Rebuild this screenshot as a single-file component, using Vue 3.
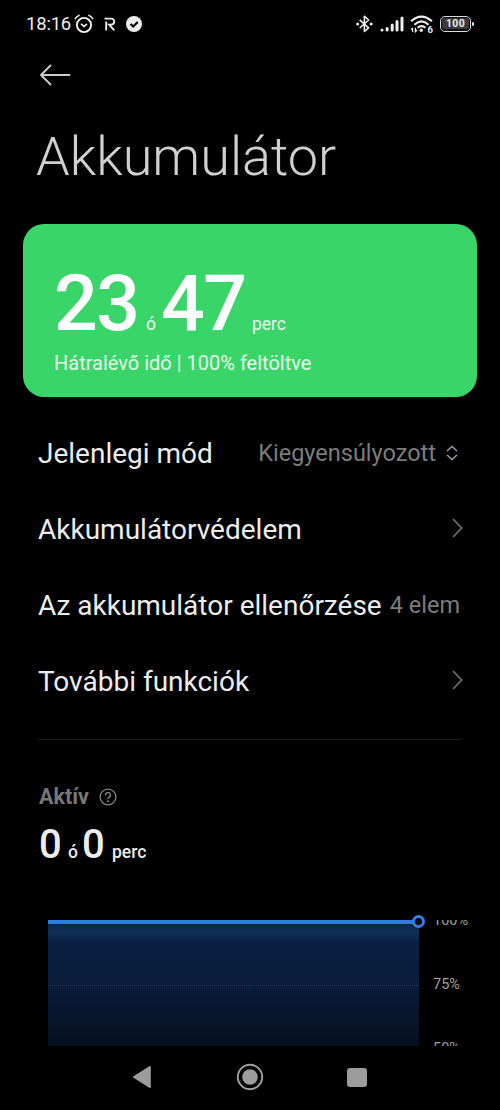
<script setup>
const rows = [
  { label: 'Jelenlegi mód', value: 'Kiegyensúlyozott', icon: 'updown' },
  { label: 'Akkumulátorvédelem', icon: 'chevron' },
  { label: 'Az akkumulátor ellenőrzése', value: '4 elem' },
  { label: 'További funkciók', icon: 'chevron' },
]
const levels = ['100%', '75%', '50%']
</script>

<template>
  <div class="screen">
    <header class="status">
      <div class="status-left">
        <span class="time">18:16</span>
        <svg class="alarm" width="20" height="20" viewBox="0 0 20 20" fill="none" stroke="#f0f0f0" stroke-linecap="round">
          <circle cx="10" cy="11" r="7.1" stroke-width="1.9" />
          <path d="M1.3 4.6Q2.6 2.3 5 1.4M18.7 4.6Q17.4 2.3 15 1.4" stroke-width="1.6" />
          <path d="M7.4 10.2L10 12.4L12.6 10.4" stroke-width="1.6" />
        </svg>
        <svg class="rlogo" width="12" height="14" viewBox="0 0 12 14" fill="none" stroke="#e8e8e8" stroke-width="1.9">
          <path d="M0.5 1.6H7.2A3 3 0 0 1 7.2 7.6H5.2L10.3 13.4M2.2 4.6V13.5" />
        </svg>
        <svg class="check" width="16" height="16" viewBox="0 0 16 16">
          <circle cx="8" cy="8" r="8" fill="#ececec" />
          <path d="M4.5 8L7.2 10.5L11.7 5.9" fill="none" stroke="#000" stroke-width="2.2" />
        </svg>
      </div>
      <div class="status-right">
        <svg width="17" height="20" viewBox="0 0 17 20" fill="none" stroke="#eee" stroke-width="1.6">
          <path d="M3.7 5.8L12.6 13.8L8.4 17.5V2.2L12.6 6L3.7 14" stroke-linejoin="round" />
          <circle cx="1.6" cy="9.9" r="1.5" fill="#eee" stroke="none" />
          <circle cx="15.2" cy="9.9" r="1.5" fill="#eee" stroke="none" />
        </svg>
        <svg class="signal" width="24" height="16" viewBox="0 0 24 16" stroke="#eee" stroke-width="3" stroke-linecap="round">
          <path d="M2 14V14M7.1 14V12.5M12.2 14V9M17 14V5.5M22 14V2" />
        </svg>
        <svg class="wifi" width="24" height="19" viewBox="0 0 24 19" fill="none" stroke="#eee" stroke-width="2.1">
          <path d="M1.1 6.2Q11.5 -3 21.9 6.2" />
          <path d="M4.4 9.7Q11.5 3.2 18.6 9.7" />
          <path d="M7.6 12.8Q11.5 9.5 15.4 12.8" />
          <circle cx="11.3" cy="15.2" r="1.7" fill="#eee" stroke="none" />
          <path d="M2.6 13V17M1 14.7L2.6 13M5.4 12.7V16.7L7 15" stroke-width="1.2" />
          <text x="17.4" y="17.9" class="gen">6</text>
        </svg>
        <div class="battery"><span>100</span></div>
      </div>
    </header>

    <div class="back">
      <svg width="32" height="22" viewBox="0 0 32 22" fill="none" stroke="#ccc" stroke-width="1.9" stroke-linecap="round" stroke-linejoin="round">
        <path d="M11.5 1.5L2 11L11.5 20.5M2 11H30.5" />
      </svg>
    </div>

    <h1>Akkumulátor</h1>

    <section class="card">
      <div class="big"><b class="n1">23</b><span class="u1">ó</span><b class="n2">47</b><span class="u2">perc</span></div>
      <div class="sub">Hátralévő idő | 100% feltöltve</div>
    </section>

    <section class="list">
      <div v-for="row in rows" :key="row.label" class="row">
        <span class="label">{{ row.label }}</span>
        <span class="right" :class="row.icon">
          <span v-if="row.value" class="value">{{ row.value }}</span>
          <svg v-if="row.icon === 'updown'" width="12" height="16" viewBox="0 0 12 16" fill="none" stroke="#9397a0" stroke-width="1.6">
            <path d="M1 6L6 1.5L11 6M1 10L6 14.5L11 10" />
          </svg>
          <svg v-if="row.icon === 'chevron'" width="11" height="20" viewBox="0 0 11 20" fill="none" stroke="#777" stroke-width="1.5">
            <path d="M1 1L9.7 10L1 19" />
          </svg>
        </span>
      </div>
    </section>

    <hr />

    <section class="active">
      <div class="active-head">
        <span>Aktív</span>
        <svg width="18" height="18" viewBox="0 0 18 18" fill="none" stroke="#858585" stroke-width="1.3">
          <circle cx="9" cy="9" r="7.9" />
          <path d="M6.5 7.2A2.5 2.5 0 1 1 10.2 9.2Q9 9.9 9 11.3" stroke-width="1.4" />
          <circle cx="9" cy="13.2" r="1" fill="#858585" stroke="none" />
        </svg>
      </div>
      <div class="duration"><b>0</b><span class="h">ó</span><b>0</b><span class="m">perc</span></div>
    </section>

    <section class="chart">
      <div class="plot">
        <div class="grid-line"></div>
        <i class="dot"></i>
      </div>
      <div class="levels"><span v-for="level in levels" :key="level">{{ level }}</span></div>
    </section>

    <nav>
      <svg width="20" height="24" viewBox="0 0 20 24" fill="#9c9c9c" stroke="#9c9c9c" stroke-width="2" stroke-linejoin="round"><path d="M2 12L17.8 2V22Z" /></svg>
      <svg class="home" width="28" height="28" viewBox="0 0 28 28"><circle cx="14" cy="14" r="12.2" fill="none" stroke="#a0a0a0" stroke-width="1.9" /><circle cx="14" cy="14" r="7.8" fill="#9c9c9c" /></svg>
      <i class="recent"></i>
    </nav>
  </div>
</template>

<style>
body { background: #000; }
</style>

<style scoped>
.screen { width: 500px; height: 1110px; overflow: hidden; background: #000; color: #ececec; font-family: Roboto, sans-serif; display: flex; flex-direction: column; }
svg { display: block; flex: none; }
.status { height: 48px; flex: none; display: flex; justify-content: space-between; padding: 0 29px 0 26px; box-sizing: border-box; }
.status-left, .status-right { display: flex; align-items: center; }
.time { font-size: 18.5px; line-height: 49px; width: 48px; letter-spacing: -0.2px; white-space: nowrap; }
.rlogo { margin-left: 10px; }
.check { margin-left: 10px; }
.signal { margin-left: 7px; }
.wifi { margin-left: 6px; margin-top: 1px; }
.gen { font: 700 9.5px Roboto, sans-serif; fill: #eee; stroke: none; }
.battery { position: relative; width: 31px; height: 16px; box-sizing: border-box; border: 1.5px solid #ddd; border-radius: 5px; margin-left: 6px; padding: 1px; }
.battery span { display: block; height: 11px; border-radius: 2px; background: #3b3b3b; font-size: 10.5px; font-weight: 700; line-height: 11px; text-align: center; letter-spacing: 0.3px; }
.battery::after { content: ''; position: absolute; right: -4px; top: 4.5px; width: 2px; height: 4px; background: #ddd; border-radius: 1px; }
.back { height: 54px; flex: none; display: flex; align-items: center; padding-left: 39px; }
h1 { margin: 0; height: 122px; flex: none; padding-left: 36px; font-size: 54px; font-weight: 300; line-height: 110px; color: #d0d0d0; white-space: nowrap; }
.card { margin: 0 23px; height: 173px; flex: none; box-sizing: border-box; border-radius: 21px; background: #3ad568; color: #fff; padding: 30px 31px 0; }
.big { display: flex; align-items: baseline; height: 94px; line-height: 100px; white-space: nowrap; }
.big b { font-size: 77px; font-weight: 500; letter-spacing: -1.5px; }
.n1 { width: 92px; }
.n2 { width: 91px; margin-left: -1px; }
.big span { font-size: 17.5px; color: #e9fff0; }
.u1 { width: 16px; }
.sub { font-size: 20px; line-height: 30px; color: #e4fbea; white-space: nowrap; }
.list { flex: none; padding-top: 18px; }
.row { height: 76.2px; display: flex; align-items: center; justify-content: space-between; padding: 0 38px; white-space: nowrap; }
.label { font-size: 28px; }
.right { display: flex; align-items: center; gap: 10px; margin-right: 2px; }
.right.updown { margin-right: 4px; }
.right.chevron { margin-right: -1px; margin-top: -3px; }
.value { font-size: 23.5px; color: #7c7c7c; }
hr { flex: none; width: 424px; height: 1px; margin: 19px 38px 0; border: 0; background: #1c1c1c; }
.active { flex: none; height: 180px; padding: 42px 39px 0; box-sizing: border-box; }
.active-head { display: flex; align-items: center; gap: 10px; font-size: 21.5px; font-weight: 700; line-height: 30px; color: #777; }
.duration { display: flex; align-items: baseline; height: 60px; margin-top: 3px; line-height: 60px; font-size: 17.5px; font-weight: 500; }
.duration b { font-size: 40px; font-weight: 500; width: 29px; }
.h { width: 14px; }
.m { margin-left: 1px; }
.chart { flex: none; height: 126px; display: flex; padding-left: 48px; }
.plot { position: relative; width: 371px; box-sizing: border-box; border-top: 4px solid #2f7ae5; background: linear-gradient(#0b284b, #10305a 8px, #0a2142 18px, #091c3a 50%, #050f20); }
.grid-line { margin-top: 61px; height: 1px; background: repeating-linear-gradient(90deg, #2b3b55 0 1px, transparent 1px 2px); }
.dot { position: absolute; right: -6px; top: -8.5px; width: 13px; height: 13px; box-sizing: border-box; border: 3.5px solid #347fe8; border-radius: 50%; background: #000; }
.levels { height: 126px; overflow: hidden; margin-left: 14px; font-size: 14.5px; color: #a0a0a0; }
.levels span { display: block; height: 64px; line-height: 2px; }
nav { flex: none; height: 63px; display: flex; align-items: center; padding-left: 132px; }
.home { margin-left: 84px; }
.recent { width: 20px; height: 19.5px; margin-left: 83px; border-radius: 3px; background: #9c9c9c; }
</style>
